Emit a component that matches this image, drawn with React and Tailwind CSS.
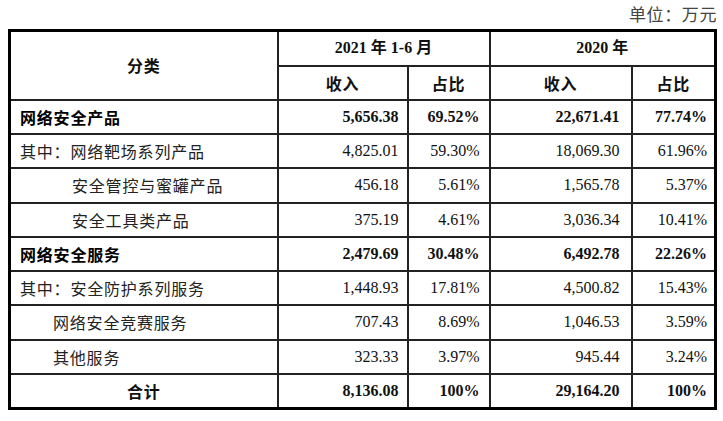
import React from "react";

const serif = "font-['Liberation_Serif','Noto_Sans_CJK_SC',serif]";
const cjk = "font-['Noto_Sans_CJK_SC',sans-serif]";

const rows = [
  { name: "网络安全产品", indent: "pl-[9px]", bold: true, a: "5,656.38", b: "69.52%", c: "22,671.41", d: "77.74%", h: "h-[34px]" },
  { name: "其中：网络靶场系列产品", indent: "pl-[9px]", a: "4,825.01", b: "59.30%", c: "18,069.30", d: "61.96%", h: "h-[34px]" },
  { name: "安全管控与蜜罐产品", indent: "pl-[61px]", a: "456.18", b: "5.61%", c: "1,565.78", d: "5.37%", h: "h-[35px]" },
  { name: "安全工具类产品", indent: "pl-[61px]", a: "375.19", b: "4.61%", c: "3,036.34", d: "10.41%", h: "h-[34px]" },
  { name: "网络安全服务", indent: "pl-[9px]", bold: true, a: "2,479.69", b: "30.48%", c: "6,492.78", d: "22.26%", h: "h-[34px]" },
  { name: "其中：安全防护系列服务", indent: "pl-[9px]", a: "1,448.93", b: "17.81%", c: "4,500.82", d: "15.43%", h: "h-[34px]" },
  { name: "网络安全竞赛服务", indent: "pl-[42px]", a: "707.43", b: "8.69%", c: "1,046.53", d: "3.59%", h: "h-[35px]" },
  { name: "其他服务", indent: "pl-[42px]", a: "323.33", b: "3.97%", c: "945.44", d: "3.24%", h: "h-[34px]" },
];

const cell = "border-2 border-[#222] p-0";

export default function App() {
  return (
    <div className="w-[723px] h-[421px] bg-white text-[#111]">
      <div className={`ml-[8px] w-[709px] h-[29px] flex items-center justify-end pb-[1px] text-[17px] tracking-[0.6px] text-[#444] ${cjk}`}>
        单位：万元
      </div>
      <table className={`ml-[8px] w-[709px] table-fixed border-collapse border-[3px] border-black text-[16px] ${serif}`}>
        <colgroup>
          <col className="w-[268px]" />
          <col className="w-[130px]" />
          <col className="w-[82px]" />
          <col className="w-[142px]" />
          <col className="w-[84px]" />
        </colgroup>
        <thead>
          <tr className="h-[35px]">
            <th rowSpan={2} className={`${cell} text-center font-bold text-[16px] tracking-[0.8px] ${cjk}`}>分类</th>
            <th colSpan={2} className={`${cell} text-center font-bold`}>2021 年 1-6 月</th>
            <th colSpan={2} className={`${cell} text-center font-bold`}>2020 年</th>
          </tr>
          <tr className="h-[34px]">
            <th className={`${cell} text-center font-bold tracking-[0.8px] ${cjk}`}>收入</th>
            <th className={`${cell} text-center font-bold tracking-[0.8px] ${cjk}`}>占比</th>
            <th className={`${cell} text-center font-bold tracking-[0.8px] ${cjk}`}>收入</th>
            <th className={`${cell} text-center font-bold tracking-[0.8px] ${cjk}`}>占比</th>
          </tr>
        </thead>
        <tbody>
          {rows.map((r) => (
            <tr key={r.name} className={r.h}>
              <td className={`${cell} ${r.indent} text-left tracking-[0.8px] ${cjk} ${r.bold ? "font-bold text-black" : "text-[#222]"}`}>
                {r.name}
              </td>
              <td className={`${cell} text-right pr-[8px] ${r.bold ? "font-bold" : ""}`}>{r.a}</td>
              <td className={`${cell} text-right pr-[9px] ${r.bold ? "font-bold" : ""}`}>{r.b}</td>
              <td className={`${cell} text-right pr-[11px] ${r.bold ? "font-bold" : ""}`}>{r.c}</td>
              <td className={`${cell} text-right pr-[7px] ${r.bold ? "font-bold" : ""}`}>{r.d}</td>
            </tr>
          ))}
          <tr className="h-[35px]">
            <td className={`${cell} text-center font-bold tracking-[0.8px] ${cjk}`}>合计</td>
            <td className={`${cell} text-right pr-[8px] font-bold`}>8,136.08</td>
            <td className={`${cell} text-right pr-[9px] font-bold`}>100%</td>
            <td className={`${cell} text-right pr-[11px] font-bold`}>29,164.20</td>
            <td className={`${cell} text-right pr-[7px] font-bold`}>100%</td>
          </tr>
        </tbody>
      </table>
    </div>
  );
}
